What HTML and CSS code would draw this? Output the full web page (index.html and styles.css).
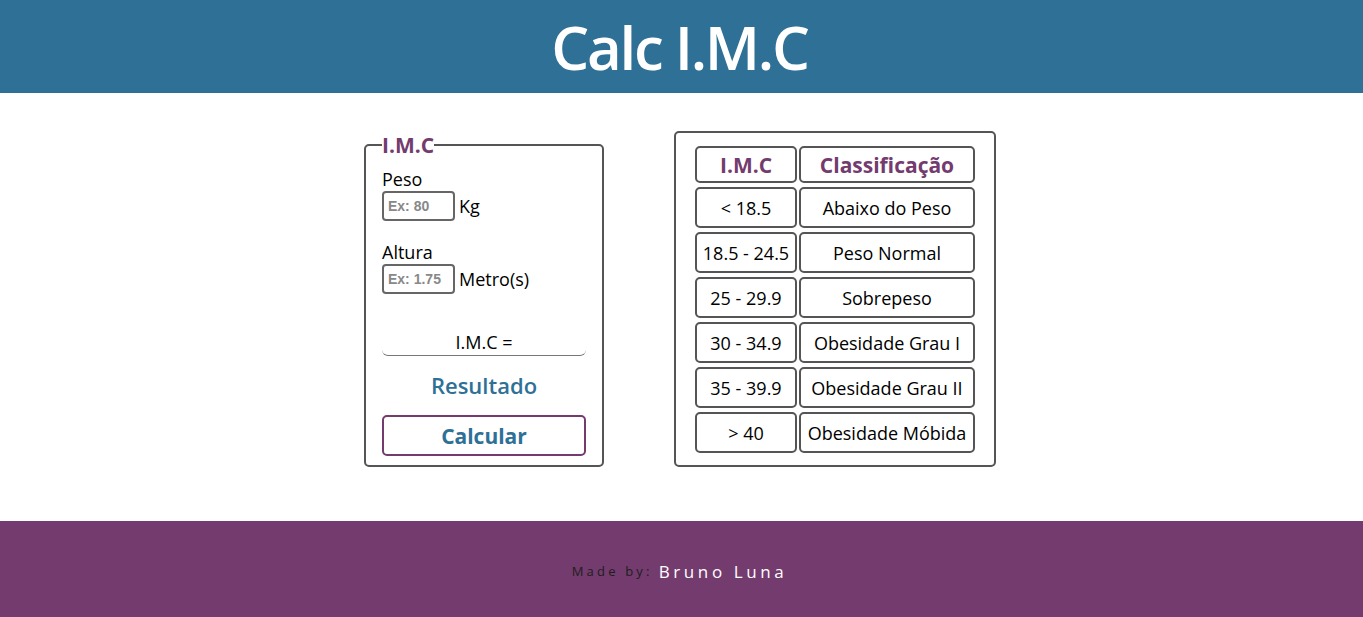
FILE: index.html
```html
<!DOCTYPE html>
<html lang="pt-BR">
<head>
<meta charset="utf-8">
<title>Calc I.M.C</title>
<link rel="stylesheet" href="styles.css">
</head>
<body>
<header class="topo">
  <h1 class="titulo">Calc I.M.C</h1>
</header>
<main class="conteudo">
  <fieldset class="calc">
    <legend class="calc-legenda">I.M.C</legend>
    <div class="campo">
      <label class="rotulo" for="peso">Peso</label>
      <div class="linha">
        <input class="entrada" id="peso" type="text" placeholder="Ex: 80">
        <span class="unidade">Kg</span>
      </div>
    </div>
    <div class="campo">
      <label class="rotulo" for="altura">Altura</label>
      <div class="linha">
        <input class="entrada" id="altura" type="text" placeholder="Ex: 1.75">
        <span class="unidade">Metro(s)</span>
      </div>
    </div>
    <div class="saida">I.M.C =</div>
    <div class="resultado">Resultado</div>
    <button class="botao" type="button">Calcular</button>
  </fieldset>
  <div class="tabela-box">
    <table class="tabela">
      <thead>
        <tr><th class="c1">I.M.C</th><th class="c2">Classificação</th></tr>
      </thead>
      <tbody>
        <tr><td class="c1">&lt; 18.5</td><td class="c2">Abaixo do Peso</td></tr>
        <tr><td class="c1">18.5 - 24.5</td><td class="c2">Peso Normal</td></tr>
        <tr><td class="c1">25 - 29.9</td><td class="c2">Sobrepeso</td></tr>
        <tr><td class="c1">30 - 34.9</td><td class="c2">Obesidade Grau I</td></tr>
        <tr><td class="c1">35 - 39.9</td><td class="c2">Obesidade Grau II</td></tr>
        <tr><td class="c1">&gt; 40</td><td class="c2">Obesidade Móbida</td></tr>
      </tbody>
    </table>
  </div>
</main>
<footer class="rodape">
  <span class="feito">Made by:</span> <span class="autor">Bruno Luna</span>
</footer>
</body>
</html>
```

FILE: styles.css
```css
* { box-sizing: border-box; }
html, body { margin: 0; padding: 0; }
body {
  font-family: "Open Sans", "Noto Sans", sans-serif;
  color: #000;
  background: #fff;
}
.topo {
  background: #2e7096;
  height: 93px;
  display: flex;
  align-items: center;
  justify-content: center;
}
.titulo {
  margin: 0;
  color: #fff;
  font-size: 60px;
  font-weight: 600;
  line-height: 1;
  letter-spacing: -2.3px;
  padding-right: 4px;
}
.conteudo {
  height: 428px;
  display: flex;
  justify-content: center;
  align-items: flex-end;
  gap: 70px;
  padding-bottom: 54px;
  padding-right: 3px;
}
.calc {
  width: 240px;
  margin: 0;
  border: 2px solid #555;
  border-radius: 5px;
  padding: 10px 16px 9px;
  display: flex;
  flex-direction: column;
}
.calc-legenda {
  padding: 0;
  color: #733b6e;
  font-weight: 700;
  font-size: 21px;
  line-height: 24px;
}
.campo { display: flex; flex-direction: column; }
.campo + .campo { margin-top: 19px; }
.rotulo { font-size: 18px; line-height: 24px; }
.linha { display: flex; align-items: center; gap: 4px; }
.entrada {
  width: 73px;
  height: 30px;
  border: 2px solid #666;
  border-radius: 4px;
  padding: 0 4px;
  font-family: "Liberation Sans", Arial, sans-serif;
  font-weight: 700;
  font-size: 14px;
  outline: none;
}
.entrada::placeholder { color: #888; }
.unidade { font-size: 18px; }
.saida {
  margin-top: 36px;
  text-align: center;
  font-size: 18px;
  line-height: 25px;
  border-bottom: 1px solid #777;
  border-radius: 0 0 6px 6px;
}
.resultado {
  margin-top: 15px;
  text-align: center;
  color: #2e7096;
  font-size: 22px;
  font-weight: 600;
  line-height: 28px;
}
.botao {
  margin-top: 16px;
  height: 41px;
  width: 100%;
  background: #fff;
  border: 2px solid #733b6e;
  border-radius: 5px;
  color: #2e7096;
  font-family: "Open Sans", "Noto Sans", sans-serif;
  font-weight: 700;
  font-size: 21px;
  cursor: pointer;
}
.tabela-box {
  border: 2px solid #555;
  border-radius: 5px;
  padding: 13px 19px 12px;
}
.tabela {
  border-collapse: separate;
  border-spacing: 2px 4px;
  margin: -4px -2px;
}
.tabela th, .tabela td {
  border: 2px solid #555;
  border-radius: 5px;
  text-align: center;
  padding: 0 4px;
}
.tabela th {
  height: 37px;
  color: #733b6e;
  font-weight: 700;
  font-size: 21px;
}
.tabela td {
  height: 41px;
  font-size: 18px;
}
.c1 { width: 102px; }
.c2 { width: 176px; }
.rodape {
  background: #733b6e;
  height: 96px;
  display: flex;
  align-items: center;
  justify-content: center;
  gap: 6px;
  padding-top: 4px;
  padding-right: 4px;
}
.feito {
  font-size: 13px;
  letter-spacing: 3.2px;
  color: #1e1e1e;
}
.autor {
  font-size: 17px;
  letter-spacing: 3.6px;
  color: #fff;
}
```
